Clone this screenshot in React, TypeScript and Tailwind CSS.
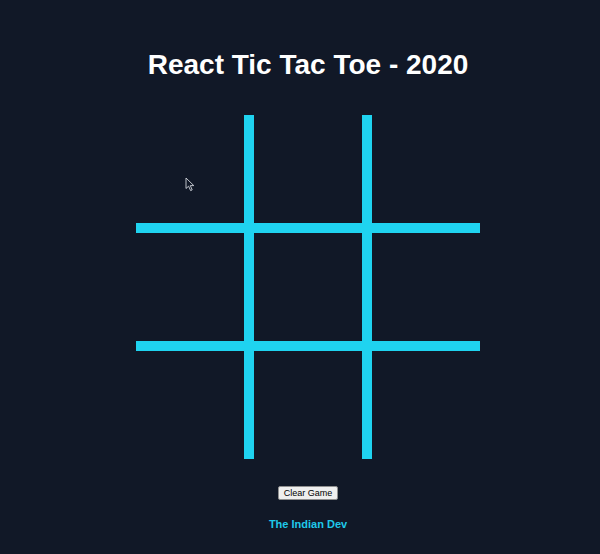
import React from "react";

const cells = Array.from({ length: 9 }, (_, i) => i);

function Cursor() {
  return (
    <svg
      className="absolute left-[185px] top-[177px]"
      width="10"
      height="15"
      viewBox="0 0 10 15"
      fill="none"
    >
      <path
        d="M1 1 L1 11.5 L3.6 9.2 L5.6 13.6 L7.2 12.9 L5.3 8.6 L8.8 8.6 Z"
        fill="#111827"
        stroke="#d1d5db"
        strokeWidth="0.9"
        strokeLinejoin="round"
      />
    </svg>
  );
}

export default function App() {
  return (
    <div className="relative min-h-[554px] w-full bg-[#111827] font-['Liberation_Sans',Arial,sans-serif]">
      <div className="flex flex-col items-center pl-[16px] pt-[49px]">
        {/* Title */}
        <h1 className="text-[28px] font-bold leading-[32px] text-white">
          React Tic Tac Toe - 2020
        </h1>

        {/* Board: the gaps are the lines */}
        <div className="mt-[34px] grid grid-cols-[repeat(3,108px)] gap-[10px] bg-[#1fd3f0]">
          {cells.map((c) => (
            <div key={c} className="h-[108px] w-[108px] bg-[#111827]" />
          ))}
        </div>

        <button className="mt-[27px] rounded-[2px] border border-[#8f8f8f] bg-[#efefef] px-[4.5px] text-[9px] leading-[12px] text-black">
          Clear Game
        </button>

        <p className="mt-[18px] text-[11px] font-bold leading-[13px] text-[#1fc8ea]">
          The Indian Dev
        </p>
      </div>

      <Cursor />
    </div>
  );
}
